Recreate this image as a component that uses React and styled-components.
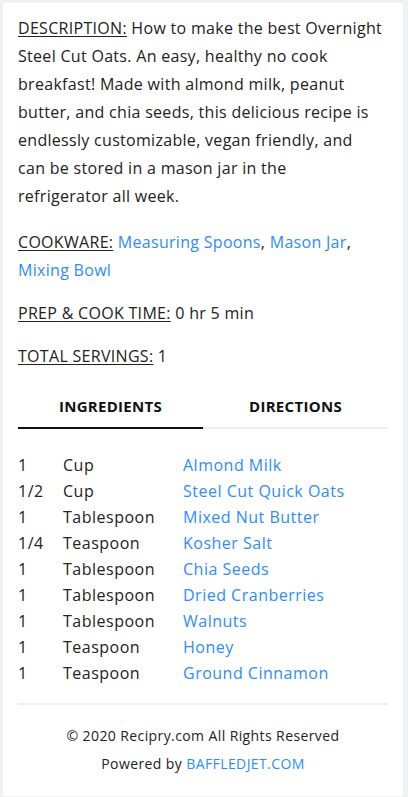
import React from 'react';
import styled, { createGlobalStyle } from 'styled-components';

const GlobalStyle = createGlobalStyle`
  html, body {
    margin: 0;
    padding: 0;
    background: #f0f1f2;
  }
  body {
    font-family: "Open Sans", "Liberation Sans", sans-serif;
    color: #222;
  }
`;

const Card = styled.div`
  margin: 3px 5px 4px 3px;
  background: #fff;
  padding: 11px 15px 18px 15px;
  box-sizing: border-box;
  min-height: 790px;
`;

const Para = styled.p`
  margin: 0 0 ${props => (props.spaced ? 18 : 15)}px;
  font-size: 16px;
  letter-spacing: 0.3px;
  line-height: 28px;
`;

const Label = styled.span`
  text-decoration: underline;
  text-underline-offset: 2px;
  text-decoration-thickness: 1px;
`;

const Link = styled.a`
  color: #2d8cff;
  text-decoration: none;
`;

const Tabs = styled.div`
  display: grid;
  grid-template-columns: 1fr 1fr;
  margin-top: 20px;
  border-bottom: 2px solid #eeeef2;
`;

const Tab = styled.div`
  text-align: center;
  font-size: 15px;
  font-weight: 700;
  letter-spacing: 0.3px;
  color: #111;
  padding: 6px 0 11px;
  margin-bottom: -2px;
  border-bottom: 2px solid ${props => (props.active ? '#111' : 'transparent')};
`;

const Ingredients = styled.div`
  padding-top: 23px;
  padding-bottom: 17px;
  border-bottom: 2px solid #eeeef2;
`;

const Row = styled.div`
  display: grid;
  grid-template-columns: 45px 120px 1fr;
  font-size: 16px;
  letter-spacing: 0.5px;
  line-height: 26px;
`;

const Footer = styled.div`
  text-align: center;
  font-size: 14px;
  letter-spacing: 0.4px;
  line-height: 28px;
  padding-top: 17px;
`;

const ingredients = [
  ['1', 'Cup', 'Almond Milk'],
  ['1/2', 'Cup', 'Steel Cut Quick Oats'],
  ['1', 'Tablespoon', 'Mixed Nut Butter'],
  ['1/4', 'Teaspoon', 'Kosher Salt'],
  ['1', 'Tablespoon', 'Chia Seeds'],
  ['1', 'Tablespoon', 'Dried Cranberries'],
  ['1', 'Tablespoon', 'Walnuts'],
  ['1', 'Teaspoon', 'Honey'],
  ['1', 'Teaspoon', 'Ground Cinnamon'],
];

export default function App() {
  return (
    <>
      <GlobalStyle />
      <Card>
        {/* breaks keep the wrapping of the original (wider) font */}
        <Para spaced>
          <Label>DESCRIPTION:</Label> How to make the best Overnight Steel Cut Oats. An easy,
          healthy no cook breakfast! Made with almond milk, peanut butter, and chia seeds, this
          delicious recipe is endlessly customizable, vegan friendly, and<br />can be stored in a
          mason jar in the<br />refrigerator all week.
        </Para>
        <Para>
          <Label>COOKWARE:</Label> <Link href="#">Measuring Spoons</Link>,{' '}
          <Link href="#">Mason Jar</Link>, <Link href="#">Mixing Bowl</Link>
        </Para>
        <Para>
          <Label>PREP &amp; COOK TIME:</Label> 0 hr 5 min
        </Para>
        <Para>
          <Label>TOTAL SERVINGS:</Label> 1
        </Para>
        <Tabs>
          <Tab active>INGREDIENTS</Tab>
          <Tab>DIRECTIONS</Tab>
        </Tabs>
        <Ingredients>
          {ingredients.map(([qty, unit, name], i) => (
            <Row key={i}>
              <span>{qty}</span>
              <span>{unit}</span>
              <Link href="#">{name}</Link>
            </Row>
          ))}
        </Ingredients>
        <Footer>
          <div>© 2020 Recipry.com All Rights Reserved</div>
          <div>
            Powered by <Link href="#">BAFFLEDJET.COM</Link>
          </div>
        </Footer>
      </Card>
    </>
  );
}
